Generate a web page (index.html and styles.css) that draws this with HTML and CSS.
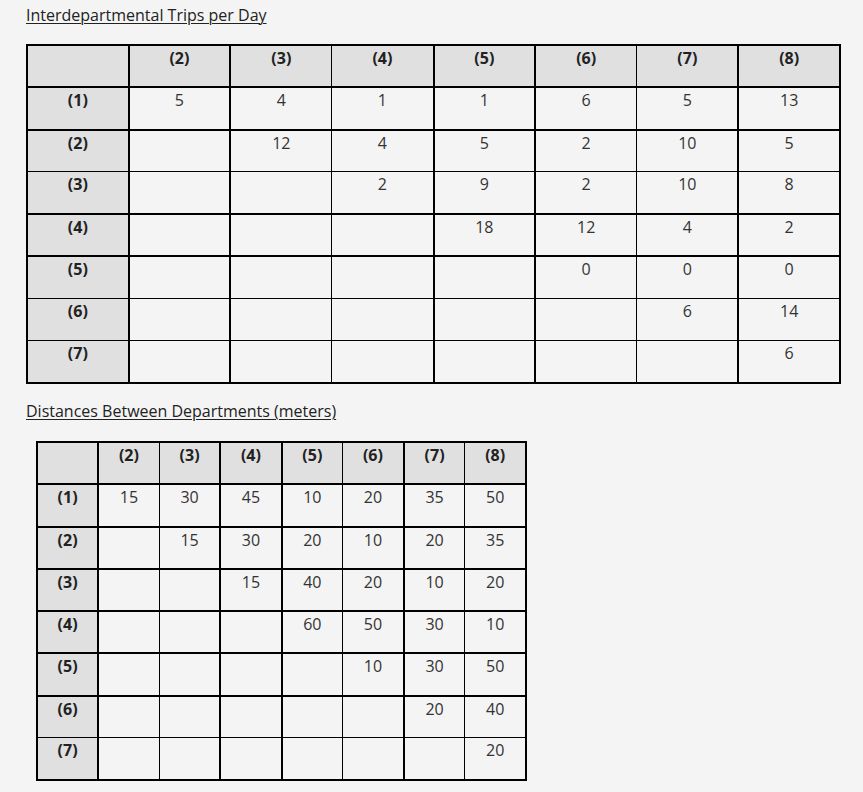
FILE: index.html
```html
<!DOCTYPE html>
<html>
<head>
<meta charset="utf-8">
<link rel="stylesheet" href="styles.css">
</head>
<body>
<div class="page">
  <p class="caption"><u>Interdepartmental Trips per Day</u></p>
  <table class="grid trips">
    <tr class="head"><th></th><th>(2)</th><th>(3)</th><th>(4)</th><th>(5)</th><th>(6)</th><th>(7)</th><th>(8)</th></tr>
    <tr><th>(1)</th><td>5</td><td>4</td><td>1</td><td>1</td><td>6</td><td>5</td><td>13</td></tr>
    <tr class="thin-b"><th>(2)</th><td></td><td>12</td><td>4</td><td>5</td><td>2</td><td>10</td><td>5</td></tr>
    <tr class="thin-t"><th>(3)</th><td></td><td></td><td>2</td><td>9</td><td>2</td><td>10</td><td>8</td></tr>
    <tr><th>(4)</th><td></td><td></td><td></td><td>18</td><td>12</td><td>4</td><td>2</td></tr>
    <tr class="thin-b"><th>(5)</th><td></td><td></td><td></td><td></td><td>0</td><td>0</td><td>0</td></tr>
    <tr class="thin-t thin-b"><th>(6)</th><td></td><td></td><td></td><td></td><td></td><td>6</td><td>14</td></tr>
    <tr class="thin-t"><th>(7)</th><td></td><td></td><td></td><td></td><td></td><td></td><td>6</td></tr>
  </table>
  <p class="caption"><u>Distances Between Departments (meters)</u></p>
  <table class="grid dist">
    <tr class="head"><th></th><th>(2)</th><th>(3)</th><th>(4)</th><th>(5)</th><th>(6)</th><th>(7)</th><th>(8)</th></tr>
    <tr><th>(1)</th><td>15</td><td>30</td><td>45</td><td>10</td><td>20</td><td>35</td><td>50</td></tr>
    <tr><th>(2)</th><td></td><td>15</td><td>30</td><td>20</td><td>10</td><td>20</td><td>35</td></tr>
    <tr><th>(3)</th><td></td><td></td><td>15</td><td>40</td><td>20</td><td>10</td><td>20</td></tr>
    <tr><th>(4)</th><td></td><td></td><td></td><td>60</td><td>50</td><td>30</td><td>10</td></tr>
    <tr><th>(5)</th><td></td><td></td><td></td><td></td><td>10</td><td>30</td><td>50</td></tr>
    <tr class="thin-b"><th>(6)</th><td></td><td></td><td></td><td></td><td></td><td>20</td><td>40</td></tr>
    <tr class="thin-t"><th>(7)</th><td></td><td></td><td></td><td></td><td></td><td></td><td>20</td></tr>
  </table>
</div>
</body>
</html>
```
FILE: styles.css
```css
html, body {
  margin: 0;
  padding: 0;
  background: #f4f4f4;
}
.page {
  padding: 3px 0 0 26px;
  font-family: "Open Sans", "DejaVu Sans", sans-serif;
  font-size: 16px;
  color: #333;
}
.caption {
  margin: 0;
  line-height: 24px;
  color: #222;
}
.caption u {
  text-decoration-thickness: 1px;
  text-underline-offset: 2px;
}
.grid {
  border-collapse: collapse;
  table-layout: fixed;
  font-size: 16px;
  line-height: 24px;
}
.trips {
  width: 815px;
  margin: 17px 0 15px 0;
}
.dist {
  width: 491px;
  margin: 18px 0 0 10px;
}
.grid th,
.grid td {
  border: 2px solid #000;
  height: 42.25px;
  padding: 0 4px;
  vertical-align: top;
  text-align: center;
  box-sizing: border-box;
}
.grid td {
  background: #f4f4f4;
  font-weight: 400;
}
.grid th {
  background: #e0e0e0;
  font-weight: 700;
  color: #222;
}
.grid .thin-b > * {
  border-bottom-width: 1px;
}
.grid .thin-t > * {
  border-top-width: 1px;
}
.trips tr > :nth-child(3),
.trips tr > :nth-child(6) {
  border-right-width: 1px;
}
.trips tr > :nth-child(4),
.trips tr > :nth-child(7) {
  border-left-width: 1px;
}
.dist tr > :nth-child(2),
.dist tr > :nth-child(5),
.dist tr > :nth-child(7) {
  border-right-width: 1px;
}
.dist tr > :nth-child(3),
.dist tr > :nth-child(6),
.dist tr > :nth-child(8) {
  border-left-width: 1px;
}
```
